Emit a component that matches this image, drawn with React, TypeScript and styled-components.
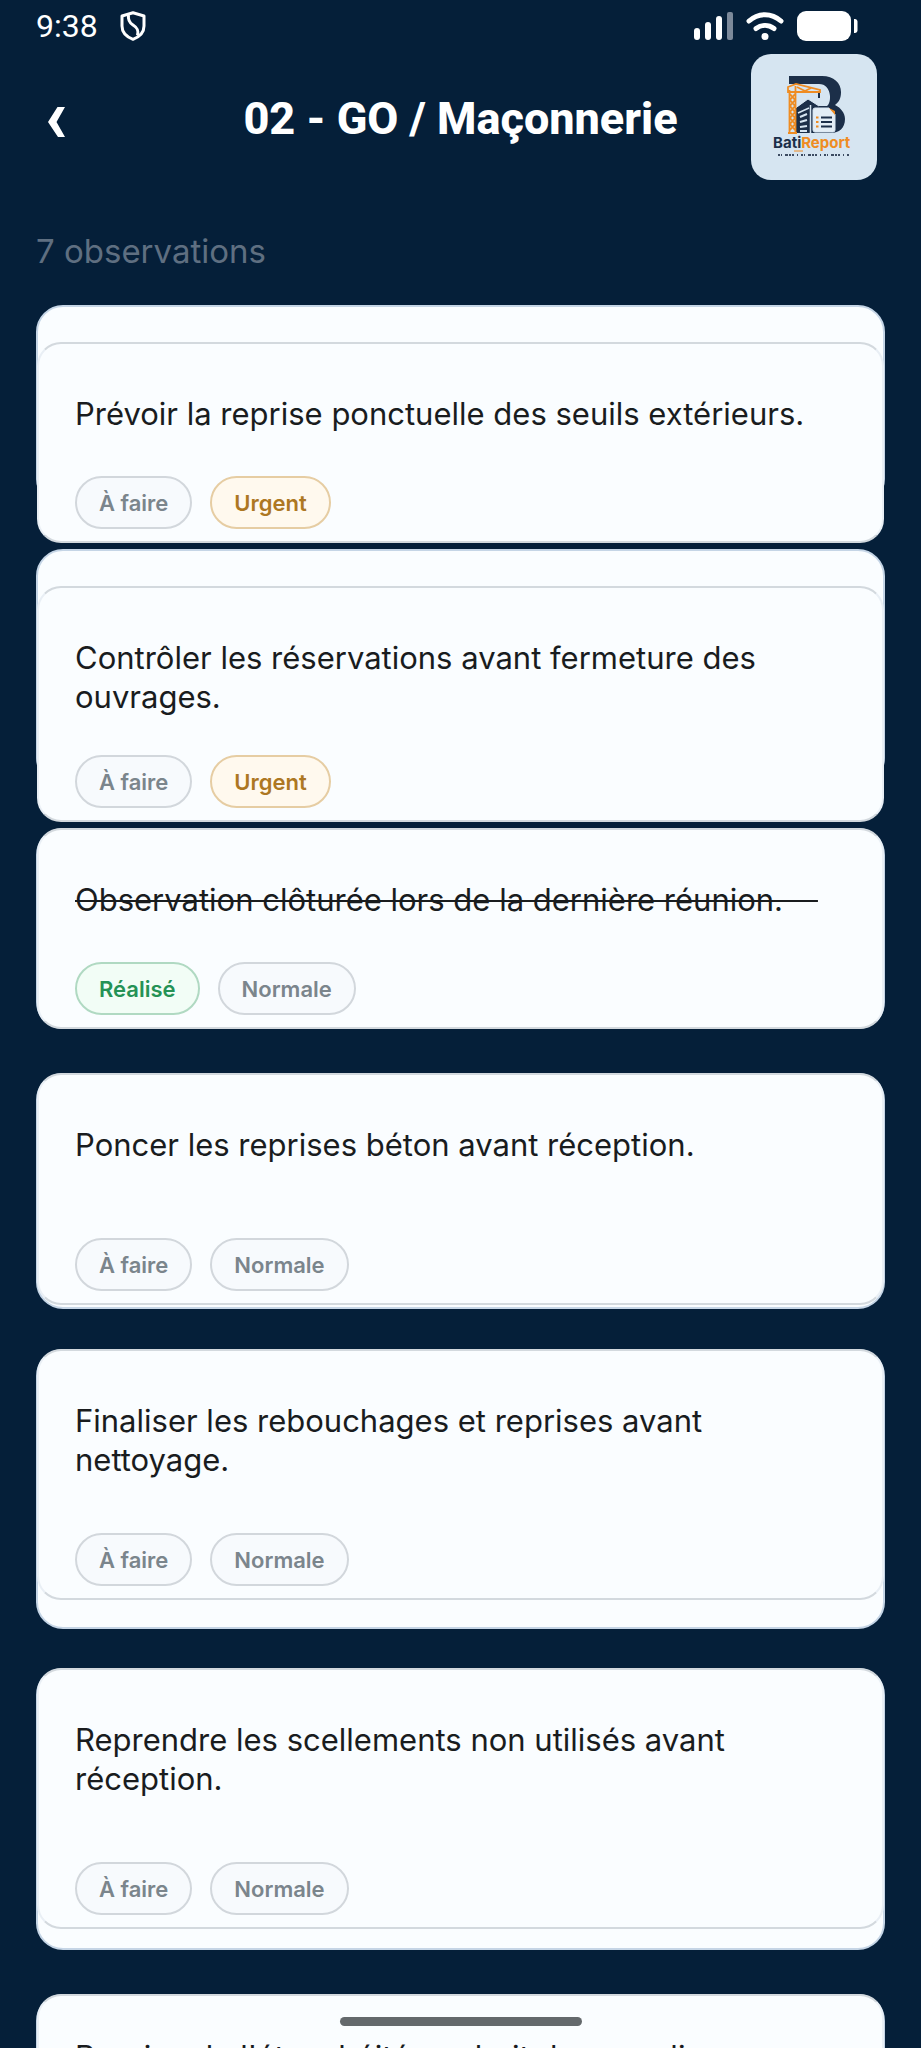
import React from "react";
import styled, { createGlobalStyle } from "styled-components";

const GlobalStyle = createGlobalStyle`
  *, *::before, *::after {
    box-sizing: border-box;
  }
  html, body {
    margin: 0;
    background-color: #051f39;
  }
`;

const Screen = styled.div`
  position: relative;
  display: flex;
  flex-direction: column;
  height: 100vh;
  overflow: hidden;
  background-color: #051f39;
  font-family: Inter, "Noto Sans", sans-serif;
`;

const StatusBar = styled.div`
  display: flex;
  align-items: center;
  justify-content: space-between;
  height: 54px;
  padding: 0 63px 2px 36px;
  color: #fff;
`;

const StatusGroup = styled.div<{ gap: number }>`
  display: flex;
  align-items: center;
  gap: ${({ gap }) => gap}px;
`;

const Clock = styled.time`
  font-family: Roboto, sans-serif;
  font-size: 32px;
  line-height: 52px;
`;

const Header = styled.header`
  display: grid;
  grid-template-columns: 126px 1fr 126px;
  align-items: center;
  padding: 0 44px;
`;

const BackButton = styled.button`
  display: flex;
  width: 42px;
  height: 64px;
  padding: 10px 0 0 4px;
  align-items: center;
  border: 0;
  background: none;
  color: #fff;
`;

const Title = styled.h1`
  margin: 0;
  padding-top: 4px;
  color: #fff;
  font-family: Roboto, sans-serif;
  font-size: 45px;
  font-weight: 800;
  line-height: 60px;
  text-align: center;
  white-space: nowrap;
`;

const LogoTile = styled.div`
  width: 126px;
  height: 126px;
  border-radius: 20px;
  background-color: #d6e5f1;
  overflow: hidden;
`;

const Count = styled.p`
  margin: 0;
  padding: 51px 36px 34px;
  color: #5f6f81;
  font-size: 33px;
  line-height: 40px;
`;

const List = styled.ul`
  display: flex;
  flex: 1;
  flex-direction: column;
  min-height: 0;
  margin: 0;
  padding: 0 36px;
  overflow: hidden;
  list-style: none;
`;

const Item = styled.li<{ spacing: number }>`
  display: grid;
  flex-shrink: 0;
  grid-template-areas: "card";
  margin-bottom: ${({ spacing }) => spacing}px;
`;

const Backing = styled.div<{ raised: number }>`
  grid-area: card;
  margin-bottom: ${({ raised }) => raised}px;
  border: 2px solid #c5d5e6;
  border-radius: 27px;
  background-color: #fafdff;
`;

const Body = styled.article<{ top: number; bottom: number; inset: number }>`
  display: flex;
  flex-direction: column;
  grid-area: card;
  margin: ${({ top, bottom }) => `${top}px 1px ${bottom}px`};
  padding: ${({ inset }) => inset}px 36px 12px;
  border: 2px solid;
  border-color: #d3d9de #e9eff5;
  border-radius: 24px;
  background-color: #fafdff;
`;

const Note = styled.p<{ done?: boolean; space: number }>`
  margin: 0 0 ${({ space }) => space}px;
  color: #191c1e;
  font-size: 31px;
  line-height: 39px;
  text-decoration: ${({ done }) => (done ? "line-through 2px" : "none")};
`;

const Tags = styled.div`
  display: flex;
  gap: 18px;
`;

const tones = {
  neutral: { text: "#7b858c", border: "#d2d7dc", fill: "#f7fafd" },
  urgent: { text: "#ad7722", border: "#e6cda3", fill: "#fff9ee" },
  done: { text: "#259255", border: "#b0d9c2", fill: "#f2fdf6" },
};

const Tag = styled.span<{ tone: keyof typeof tones }>`
  padding: 2px 22px 0;
  border: 2px solid ${({ tone }) => tones[tone].border};
  border-radius: 27px;
  background-color: ${({ tone }) => tones[tone].fill};
  color: ${({ tone }) => tones[tone].text};
  font-size: 22px;
  font-weight: 600;
  line-height: 47px;
`;

const HomeIndicator = styled.div`
  position: absolute;
  bottom: 22px;
  left: 50%;
  width: 242px;
  height: 9px;
  border-radius: 5px;
  background-color: #64696c;
  transform: translateX(-50%);
`;

interface Observation {
  text: string;
  done?: boolean;
  urgent?: boolean;
  top?: number;
  bottom?: number;
  inset?: number;
  space?: number;
  spacing?: number;
}

const observations: Observation[] = [
  {
    text: "Prévoir la reprise ponctuelle des seuils extérieurs.",
    urgent: true,
    top: 37,
    spacing: 6,
  },
  {
    text: "Contrôler les réservations avant fermeture des ouvrages.",
    urgent: true,
    top: 37,
    space: 39,
    spacing: 6,
  },
  {
    text: "Observation clôturée lors de la dernière réunion.\u00a0\u00a0\u00a0\u00a0",
    done: true,
    spacing: 44,
  },
  {
    text: "Poncer les reprises béton avant réception.",
    space: 74,
    bottom: 4,
    spacing: 40,
  },
  {
    text: "Finaliser les rebouchages et reprises avant nettoyage.",
    space: 54,
    bottom: 29,
    spacing: 39,
  },
  {
    text: "Reprendre les scellements non utilisés avant réception.",
    space: 64,
    bottom: 21,
    spacing: 44,
  },
  {
    text: "Reprise de l'étanchéité au droit des escaliers.",
    inset: 41,
  },
];

const ShieldIcon = () => (
  <svg width="26" height="30" viewBox="0 0 26 30" fill="none" stroke="#fff" strokeWidth="3">
    <path d="M13 1.800 24 5v10c0 6.500-5 11-11 13.300C7 26 2 21.500 2 15V5Z" strokeLinejoin="round" />
    <path d="M8.500 4c-.7 5 .5 7.500 4.500 10s6 5 4.500 10.500" />
  </svg>
);

const SignalIcon = () => (
  <svg width="40" height="28" viewBox="0 0 40 28" fill="#fff">
    <rect x="1" y="16" width="6" height="12" rx="3" />
    <rect x="12" y="10" width="6" height="18" rx="3" />
    <rect x="23" y="4" width="6" height="24" rx="3" />
    <rect x="34" y="0" width="6" height="28" rx="2" fill="#7c899a" />
  </svg>
);

const WifiIcon = () => (
  <svg width="38" height="28" viewBox="0 0 38 28" fill="none" stroke="#fff" strokeWidth="5" strokeLinecap="round">
    <path d="M3 9c9.500-8.500 22.500-8.500 32 0M10 16.500c5.500-4 12.500-4 18 0" />
    <circle cx="19" cy="24.500" r="3.500" fill="#fff" stroke="none" />
  </svg>
);

const BatteryIcon = () => (
  <svg width="61" height="30" viewBox="0 0 61 30" fill="#fff">
    <rect width="54" height="30" rx="9" />
    <path d="M57 8c3 0 3.500 1.500 3.500 3v8c0 1.500-.5 3-3.500 3Z" />
  </svg>
);

const BackIcon = () => (
  <svg width="18" height="30" viewBox="0 0 18 30" fill="#fff">
    <path d="M9.500 0h7.500L8.500 15 17 30H10L0 15Z" />
  </svg>
);

const BatiReportLogo = () => (
  <svg width="126" height="126" viewBox="0 0 126 126" role="img" aria-label="BatiReport">
    <path
      d="M38 22h33c12 0 19 7 19 16 0 6-2 10-6 13 6 3 10 8 10 14 0 9-6 14-14 14H45V54l12-9 11 7h8c5-3 5-22-8-22H38Z"
      fill="#1c2f49"
    />
    <path d="M45 53.500 57 45l11 7" fill="none" stroke="#d6e5f1" strokeWidth="1" />
    <path d="m47 59 11-5M59.500 51v28" fill="none" stroke="#d6e5f1" strokeWidth="1.500" />
    <path
      d="m49 63 7-3M49 68l7-2M49 73l7-1M49 77h7"
      stroke="#d6e5f1"
      strokeWidth="2"
    />
    <path
      d="M38.500 80V36M44.500 80V32M37 79h9M37 37V33l8-3 24 6v2H37ZM46 33l8 4 6-3M39 40l5 6-5 6 5 6-5 6 5 6-5 6M44 40l-5 6 5 6-5 6 5 6-5 6 5 6"
      fill="none"
      stroke="#ef8c22"
      strokeWidth="1.800"
    />
    <path d="M68 39v5" stroke="#1c2f49" strokeWidth="2" />
    <path
      d="M62 56q0-2 2-2h14l6 6v16q0 2-2 2H64q-2 0-2-2Z"
      fill="#e3edf5"
      stroke="#d6e5f1"
    />
    <path d="m78 54 6 7v-4Z" fill="#ef8c22" />
    <path d="M70 63.500h11M70 68h11M70 72.500h11" stroke="#1c2f49" strokeWidth="2" />
    <path d="M65 63.500h2.500M65 68h2.500M65 72.500h2.500" stroke="#ef8c22" strokeWidth="2" />
    <text x="22" y="94" fontFamily="Inter, sans-serif" fontSize="15" fontWeight="700" fill="#1c2f49">
      Bati
      <tspan fill="#ef8c22">Report</tspan>
    </text>
    <path d="M43 97h9" stroke="#ef8c22" strokeWidth="1" />
    <path
      d="M27 101h71"
      stroke="#3d4c62"
      strokeWidth="2"
      strokeDasharray="2 1 1 3 3 1 2 1 2 3 1 3"
    />
  </svg>
);

const ObservationItem = ({
  text,
  done,
  urgent,
  top = 0,
  bottom = 0,
  inset = 50,
  space = 43,
  spacing = 0,
}: Observation) => {
  return (
    <Item spacing={spacing}>
      <Backing raised={top} />
      <Body top={top} bottom={bottom} inset={inset}>
        <Note done={done} space={space}>
          {text}
        </Note>
        <Tags>
          <Tag tone={done ? "done" : "neutral"}>{done ? "Réalisé" : "À faire"}</Tag>
          <Tag tone={urgent ? "urgent" : "neutral"}>{urgent ? "Urgent" : "Normale"}</Tag>
        </Tags>
      </Body>
    </Item>
  );
};

export default function App() {
  return (
    <Screen>
      <GlobalStyle />
      <StatusBar>
        <StatusGroup gap={22}>
          <Clock>9:38</Clock>
          <ShieldIcon />
        </StatusGroup>
        <StatusGroup gap={13}>
          <SignalIcon />
          <WifiIcon />
          <BatteryIcon />
        </StatusGroup>
      </StatusBar>
      <Header>
        <BackButton aria-label="Retour">
          <BackIcon />
        </BackButton>
        <Title>02 - GO / Maçonnerie</Title>
        <LogoTile>
          <BatiReportLogo />
        </LogoTile>
      </Header>
      <Count>{observations.length} observations</Count>
      <List>
        {observations.map((observation) => (
          <ObservationItem key={observation.text} {...observation} />
        ))}
      </List>
      <HomeIndicator />
    </Screen>
  );
}
